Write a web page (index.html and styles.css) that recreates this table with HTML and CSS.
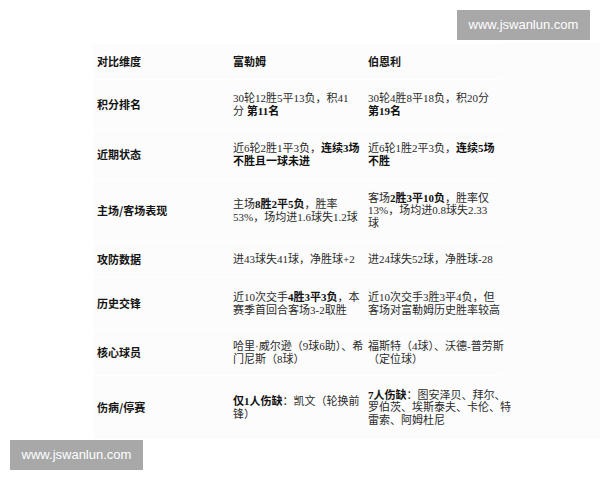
FILE: index.html
```html
<!DOCTYPE html>
<html lang="zh">
<head>
<meta charset="utf-8">
<link rel="stylesheet" href="styles.css">
</head>
<body>
<div class="page">
  <div class="table">
    <div class="cell label"><div>对比维度</div></div>
    <div class="cell head"><div>富勒姆</div></div>
    <div class="cell head"><div>伯恩利</div></div>

    <div class="cell label"><div>积分排名</div></div>
    <div class="cell"><div>30轮12胜5平13负，积41<br>分 <b>第11名</b></div></div>
    <div class="cell"><div>30轮4胜8平18负，积20分<br><b>第19名</b></div></div>

    <div class="cell label"><div>近期状态</div></div>
    <div class="cell"><div>近6轮2胜1平3负，<b>连续3场<br>不胜且一球未进</b></div></div>
    <div class="cell"><div>近6轮1胜2平3负，<b>连续5场<br>不胜</b></div></div>

    <div class="cell label"><div>主场/客场表现</div></div>
    <div class="cell"><div>主场<b>8胜2平5负</b>，胜率<br>53%，场均进1.6球失1.2球</div></div>
    <div class="cell"><div>客场<b>2胜3平10负</b>，胜率仅<br>13%，场均进0.8球失2.33<br>球</div></div>

    <div class="cell label"><div>攻防数据</div></div>
    <div class="cell"><div>进43球失41球，净胜球+2</div></div>
    <div class="cell"><div>进24球失52球，净胜球-28</div></div>

    <div class="cell label"><div>历史交锋</div></div>
    <div class="cell"><div>近10次交手<b>4胜3平3负</b>，本<br>赛季首回合客场3-2取胜</div></div>
    <div class="cell"><div>近10次交手3胜3平4负，但<br>客场对富勒姆历史胜率较高</div></div>

    <div class="cell label"><div>核心球员</div></div>
    <div class="cell"><div>哈里·威尔逊（9球6助）、希<br>门尼斯（8球）</div></div>
    <div class="cell"><div>福斯特（4球）、沃德-普劳斯<br>（定位球）</div></div>

    <div class="cell label"><div>伤病/停赛</div></div>
    <div class="cell"><div><b>仅1人伤缺</b>：凯文（轮换前<br>锋）</div></div>
    <div class="cell"><div><b>7人伤缺</b>：图安泽贝、拜尔、<br>罗伯茨、埃斯泰夫、卡伦、特<br>雷索、阿姆杜尼</div></div>
  </div>
</div>
<div class="mark mark-top">www.jswanlun.com</div>
<div class="mark mark-bottom">www.jswanlun.com</div>
</body>
</html>
```
FILE: styles.css
```css
html, body {
  margin: 0;
  padding: 0;
  background: #ffffff;
}
.page {
  width: 600px;
  height: 480px;
  padding: 43px 0 0 93px;
  box-sizing: border-box;
}
.table {
  display: grid;
  grid-template-columns: 135px 135px 140px;
  grid-template-rows: 36px 50px 50px 62px 36px 52px 46px 64px;
  background: #fcfcfc;
  font-family: "Liberation Serif", "Noto Sans CJK SC", serif;
  font-size: 11px;
  line-height: 12.5px;
  color: #2a2a2a;
}
.cell {
  display: flex;
  align-items: center;
  padding: 0 2px 0 5px;
  border-top: 1px solid #ffffff;
  white-space: nowrap;
}
.cell b {
  font-weight: bold;
  color: #111111;
}
.label {
  padding-left: 4px;
  font-family: "Noto Sans CJK SC", sans-serif;
  font-weight: bold;
  color: #141414;
}
.head {
  font-family: "Noto Sans CJK SC", sans-serif;
  font-weight: bold;
  color: #141414;
}
.mark {
  position: absolute;
  width: 133px;
  height: 30px;
  background: #a8a8a8;
  color: #ffffff;
  font-family: "Liberation Sans", Arial, sans-serif;
  font-size: 13px;
  line-height: 30px;
  text-align: center;
}
.mark-top {
  left: 457px;
  top: 10px;
}
.mark-bottom {
  left: 10px;
  top: 440px;
}
```
